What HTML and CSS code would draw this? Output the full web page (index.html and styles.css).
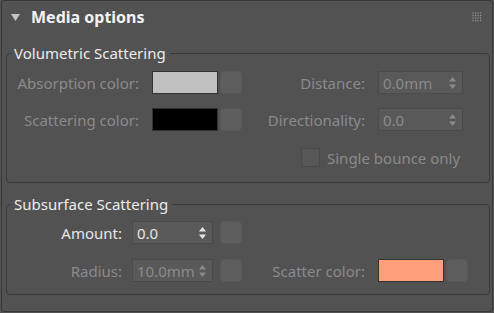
FILE: index.html
```html
<!DOCTYPE html>
<html>
<head>
<meta charset="utf-8">
<link rel="stylesheet" href="styles.css">
</head>
<body>
<div class="panel">
  <div class="header">
    <svg class="caret" width="9" height="7" viewBox="0 0 9 7"><polygon points="0,0 9,0 4.5,7" fill="#c4c4c4"/></svg>
    <span class="title">Media options</span>
    <svg class="grip" width="10" height="10" viewBox="0 0 10 10" fill="#9c9c9c">
      <rect x="0.5" y="0.5" width="1.2" height="1.2"/><rect x="3" y="0.5" width="1.2" height="1.2"/><rect x="5.5" y="0.5" width="1.2" height="1.2"/><rect x="8" y="0.5" width="1.2" height="1.2"/>
      <rect x="0.5" y="3" width="1.2" height="1.2"/><rect x="3" y="3" width="1.2" height="1.2"/><rect x="5.5" y="3" width="1.2" height="1.2"/><rect x="8" y="3" width="1.2" height="1.2"/>
      <rect x="0.5" y="5.5" width="1.2" height="1.2"/><rect x="3" y="5.5" width="1.2" height="1.2"/><rect x="5.5" y="5.5" width="1.2" height="1.2"/><rect x="8" y="5.5" width="1.2" height="1.2"/>
      <rect x="0.5" y="8" width="1.2" height="1.2"/><rect x="3" y="8" width="1.2" height="1.2"/><rect x="5.5" y="8" width="1.2" height="1.2"/><rect x="8" y="8" width="1.2" height="1.2"/>
    </svg>
  </div>

  <fieldset class="group group-vol">
    <legend class="legend">Volumetric Scattering</legend>
    <div class="row row-first">
      <span class="lbl lbl-a dis">Absorption color:</span>
      <span class="swatch swatch-grey"></span>
      <span class="btn"></span>
      <span class="lbl2 dis">Distance:</span>
      <span class="spin spin-wide dis"><span class="val">0.0mm</span>
        <svg class="arrows" width="7" height="12" viewBox="0 0 7 12"><polygon points="3.5,0 7,4.5 0,4.5"/><polygon points="0,7.5 7,7.5 3.5,12"/></svg>
      </span>
    </div>
    <div class="row row-second">
      <span class="lbl lbl-a dis">Scattering color:</span>
      <span class="swatch swatch-black"></span>
      <span class="btn"></span>
      <span class="lbl2 dis">Directionality:</span>
      <span class="spin spin-wide dis"><span class="val">0.0</span>
        <svg class="arrows" width="7" height="12" viewBox="0 0 7 12"><polygon points="3.5,0 7,4.5 0,4.5"/><polygon points="0,7.5 7,7.5 3.5,12"/></svg>
      </span>
    </div>
    <div class="row row-check">
      <span class="check"></span>
      <span class="dis">Single bounce only</span>
    </div>
  </fieldset>

  <fieldset class="group group-sub">
    <legend class="legend">Subsurface Scattering</legend>
    <div class="row row-first">
      <span class="lbl lbl-b">Amount:</span>
      <span class="spin spin-narrow"><span class="val">0.0</span>
        <svg class="arrows" width="7" height="12" viewBox="0 0 7 12"><polygon points="3.5,0 7,4.5 0,4.5"/><polygon points="0,7.5 7,7.5 3.5,12"/></svg>
      </span>
      <span class="btn btn-gap"></span>
    </div>
    <div class="row row-radius">
      <span class="lbl lbl-b dis">Radius:</span>
      <span class="spin spin-narrow dis"><span class="val">10.0mm</span>
        <svg class="arrows" width="7" height="12" viewBox="0 0 7 12"><polygon points="3.5,0 7,4.5 0,4.5"/><polygon points="0,7.5 7,7.5 3.5,12"/></svg>
      </span>
      <span class="btn btn-gap"></span>
      <span class="lbl2 dis">Scatter color:</span>
      <span class="swatch swatch-salmon"></span>
      <span class="btn"></span>
    </div>
  </fieldset>
</div>
</body>
</html>
```

FILE: styles.css
```css
html, body {
  margin: 0;
  padding: 0;
  background: #525252;
}
body {
  font-family: "Noto Sans", "Open Sans", sans-serif;
  font-size: 15px;
  color: #e6e6e6;
}
.panel {
  box-sizing: border-box;
  width: 492px;
  height: 312px;
  margin: 0 1px 0 1px;
  border: 1px solid #393939;
  border-radius: 3px;
  background: #525252;
}
.header {
  display: flex;
  align-items: center;
  height: 32px;
  padding-left: 9px;
  padding-right: 10px;
}
.caret {
  display: block;
  margin-right: 11px;
  margin-top: 0;
}
.title {
  font-weight: bold;
  color: #f2f2f2;
  font-size: 16px;
  line-height: 20px;
  margin-top: -1px;
}
.grip {
  display: block;
  margin-left: auto;
  margin-top: -1px;
}
.group {
  margin: 10px 2px 0 4px;
  padding: 0 0 13px 0;
  border: 1px solid #3a3a3a;
  border-radius: 4px;
  min-width: 0;
}
.group-sub {
  margin-top: 11px;
  padding-bottom: 12px;
}
.legend {
  margin-left: 4px;
  padding: 0 4px 0 3px;
  line-height: 20px;
  color: #ececec;
}
.row {
  display: flex;
  align-items: center;
  height: 23px;
  padding-right: 26px;
}
.group-vol .row-first { margin-top: 8px; }
.row-second { margin-top: 14px; }
.row-check { margin-top: 15px; padding-left: 294px; }
.group-sub .row-first { margin-top: 7px; }
.row-radius { margin-top: 15px; padding-right: 21px; }
.dis { color: #8b8b8b; }
.lbl {
  text-align: right;
  line-height: 20px;
  white-space: nowrap;
}
.lbl-a { width: 132px; margin-right: 13px; }
.lbl-b { width: 115px; margin-right: 10px; }
.lbl2 {
  flex: 1;
  text-align: right;
  margin-right: 13px;
  white-space: nowrap;
}
.swatch {
  box-sizing: border-box;
  width: 66px;
  height: 23px;
  border: 1px solid #333333;
}
.swatch-grey { background: #c0c0c0; }
.swatch-black { background: #000000; }
.swatch-salmon { background: #ff9f7b; }
.btn {
  box-sizing: border-box;
  width: 22px;
  height: 23px;
  margin-left: 2px;
  background: #5e5e5e;
  border: 1px solid #585858;
  border-radius: 4px;
}
.btn-gap { margin-left: 7px; }
.spin {
  box-sizing: border-box;
  display: flex;
  align-items: center;
  height: 23px;
  padding-left: 4px;
  padding-right: 6px;
  background: #595959;
  border: 1px solid #4a4a4a;
  color: #e6e6e6;
  fill: #e6e6e6;
}
.spin.dis { color: #8b8b8b; fill: #8b8b8b; }
.spin-wide { width: 85px; }
.spin-narrow { width: 81px; }
.val {
  flex: 1;
  line-height: 20px;
  white-space: nowrap;
  overflow: hidden;
}
.arrows { display: block; flex: none; }
.check {
  box-sizing: border-box;
  width: 19px;
  height: 19px;
  margin-right: 7px;
  background: #575757;
  border: 1px solid #4a4a4a;
}
```
